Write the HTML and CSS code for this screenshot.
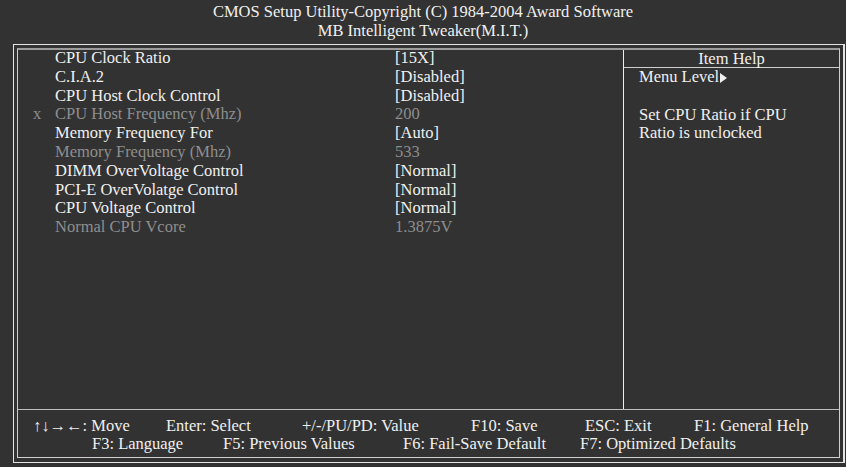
FILE: index.html
```html
<!DOCTYPE html>
<html lang="en">
<head>
    <meta charset="UTF-8">
    <title>MB Intelligent Tweaker(M.I.T.)</title>
    <link rel="stylesheet" href="styles.css">
</head>
<body>
    <div class="title">
        <div>CMOS Setup Utility-Copyright (C) 1984-2004 Award Software</div>
        <div>MB Intelligent Tweaker(M.I.T.)</div>
    </div>

    <div class="frame">
        <div class="inner">
            <div class="main">
                <div class="items">
                    <div class="row"><span class="mark"></span><span class="label">CPU Clock Ratio</span><span class="value">[15X]</span></div>
                    <div class="row"><span class="mark"></span><span class="label">C.I.A.2</span><span class="value">[Disabled]</span></div>
                    <div class="row"><span class="mark"></span><span class="label">CPU Host Clock Control</span><span class="value">[Disabled]</span></div>
                    <div class="row dim"><span class="mark">x</span><span class="label">CPU Host Frequency (Mhz)</span><span class="value">200</span></div>
                    <div class="row"><span class="mark"></span><span class="label">Memory Frequency For</span><span class="value">[Auto]</span></div>
                    <div class="row dim"><span class="mark"></span><span class="label">Memory Frequency (Mhz)</span><span class="value">533</span></div>
                    <div class="row"><span class="mark"></span><span class="label">DIMM OverVoltage Control</span><span class="value">[Normal]</span></div>
                    <div class="row"><span class="mark"></span><span class="label">PCI-E OverVolatge Control</span><span class="value">[Normal]</span></div>
                    <div class="row"><span class="mark"></span><span class="label">CPU Voltage Control</span><span class="value">[Normal]</span></div>
                    <div class="row dim"><span class="mark"></span><span class="label">Normal CPU Vcore</span><span class="value">1.3875V</span></div>
                </div>

                <div class="help">
                    <div class="help-title">Item Help</div>
                    <div class="help-text">
                        <div>Menu Level<svg class="arrow" width="7" height="10" viewBox="0 0 7 10"><polygon points="0,0 7,5 0,10" fill="#f0f0f0"/></svg></div>
                        <div>&nbsp;</div>
                        <div>Set CPU Ratio if CPU</div>
                        <div>Ratio is unclocked</div>
                    </div>
                </div>
            </div>

            <div class="keys">
                <div class="keyrow first">
                    <span class="k1">↑↓→←: Move</span>
                    <span class="k2">Enter: Select</span>
                    <span class="k3">+/-/PU/PD: Value</span>
                    <span class="k4">F10: Save</span>
                    <span class="k5">ESC: Exit</span>
                    <span>F1: General Help</span>
                </div>
                <div class="keyrow second">
                    <span class="k6">F3: Language</span>
                    <span class="k7">F5: Previous Values</span>
                    <span class="k8">F6: Fail-Save Default</span>
                    <span>F7: Optimized Defaults</span>
                </div>
            </div>
        </div>
    </div>
</body>
</html>
```

FILE: styles.css
```css
body {
    margin: 0;
    background-color: #323232;
    color: #f0f0f0;
    font-family: 'Liberation Serif', 'Times New Roman', 'DejaVu Serif', serif;
    font-size: 16.5px;
}

.title {
    height: 44px;
    padding-top: 2px;
    box-sizing: border-box;
    text-align: center;
    line-height: 19px;
}

.frame {
    margin-left: 13px;
    width: 832px;
    height: 419px;
    box-sizing: border-box;
    border: 1px solid #e4e4e4;
    border-right-width: 2px;
    padding: 3px 3px 4px 3px;
}

.inner {
    height: 100%;
    box-sizing: border-box;
    border: 1px solid #cfcfcf;
    border-top: 2px solid #9c9c9c;
    display: flex;
    flex-direction: column;
}

.main {
    flex: 1;
    display: flex;
}

.items {
    width: 605px;
    box-sizing: border-box;
    padding-left: 15px;
    margin-top: -1px;
}

.row {
    display: grid;
    grid-template-columns: 22px 340px 1fr;
    line-height: 18.8px;
    white-space: nowrap;
}

.dim {
    color: #8e8e8e;
}

.help {
    flex: 1;
    border-left: 1px solid #ececec;
}

.help-title {
    text-align: center;
    line-height: 17px;
    border-bottom: 1px solid #cfcfcf;
}

.help-text {
    padding-left: 15px;
    line-height: 18.8px;
}

.arrow {
    margin-left: 1px;
    vertical-align: -1px;
}

.keys {
    height: 48px;
    box-sizing: border-box;
    border-top: 1px solid #bdbdbd;
    padding-top: 7px;
    line-height: 17.6px;
    white-space: nowrap;
}

.keyrow {
    display: flex;
}

.keyrow.first {
    padding-left: 15px;
}

.keyrow.second {
    padding-left: 74px;
}

.k1 { width: 133px; }
.k2 { width: 136px; }
.k3 { width: 169px; }
.k4 { width: 114px; }
.k5 { width: 109px; }
.k6 { width: 131px; }
.k7 { width: 180px; }
.k8 { width: 177px; }
```
